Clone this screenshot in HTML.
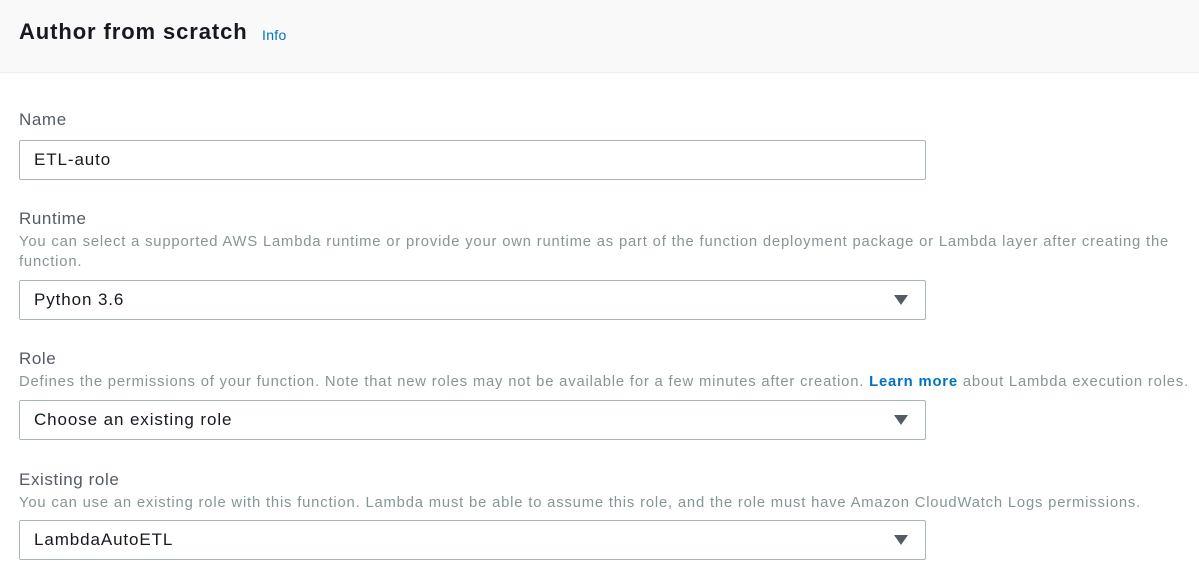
<!DOCTYPE html>
<html><head><style>
body{margin:0;width:1199px;height:588px;background:#fff;font-family:"Liberation Sans",sans-serif;overflow:hidden;position:relative}
.hdr{position:absolute;left:0;top:0;width:1199px;height:72px;background:#f9f9f9;border-bottom:1px solid #eaeded}
.t{position:absolute;left:19px;top:19px;font-size:22px;font-weight:bold;color:#16191f;letter-spacing:0.9px}
.info{position:absolute;left:262px;top:27px;font-size:14px;color:#0073bb;letter-spacing:0.3px}
.lbl{position:absolute;left:19px;font-size:17px;color:#545b64;letter-spacing:0.6px}
.desc{position:absolute;left:19px;font-size:14.8px;color:#879596;line-height:20px;width:1170px;letter-spacing:0.82px}
.desc b{color:#0073bb}
.box{position:absolute;left:19px;height:38px;border:1px solid #aab7b8;border-radius:2px;font-size:17px;color:#16191f;line-height:38px;padding-left:14px;width:891px;letter-spacing:0.9px}
.tri{position:absolute;right:17px;top:14px;width:0;height:0;border-left:7px solid transparent;border-right:7px solid transparent;border-top:10px solid #545b64}
</style></head><body>
<div class="hdr"><div class="t">Author from scratch</div><div class="info">Info</div></div>
<div class="lbl" style="top:110px">Name</div>
<div class="box" style="top:140px">ETL-auto</div>
<div class="lbl" style="top:209px">Runtime</div>
<div class="desc" style="top:232px">You can select a supported AWS Lambda runtime or provide your own runtime as part of the function deployment package or Lambda layer after creating the function.</div>
<div class="box" style="top:280px">Python 3.6<div class="tri"></div></div>
<div class="lbl" style="top:349px">Role</div>
<div class="desc" style="top:372px;width:1199px;white-space:nowrap">Defines the permissions of your function. Note that new roles may not be available for a few minutes after creation. <b>Learn more</b> about Lambda execution roles.</div>
<div class="box" style="top:400px">Choose an existing role<div class="tri"></div></div>
<div class="lbl" style="top:470px">Existing role</div>
<div class="desc" style="top:493px">You can use an existing role with this function. Lambda must be able to assume this role, and the role must have Amazon CloudWatch Logs permissions.</div>
<div class="box" style="top:520px">LambdaAutoETL<div class="tri"></div></div>
</body></html>
